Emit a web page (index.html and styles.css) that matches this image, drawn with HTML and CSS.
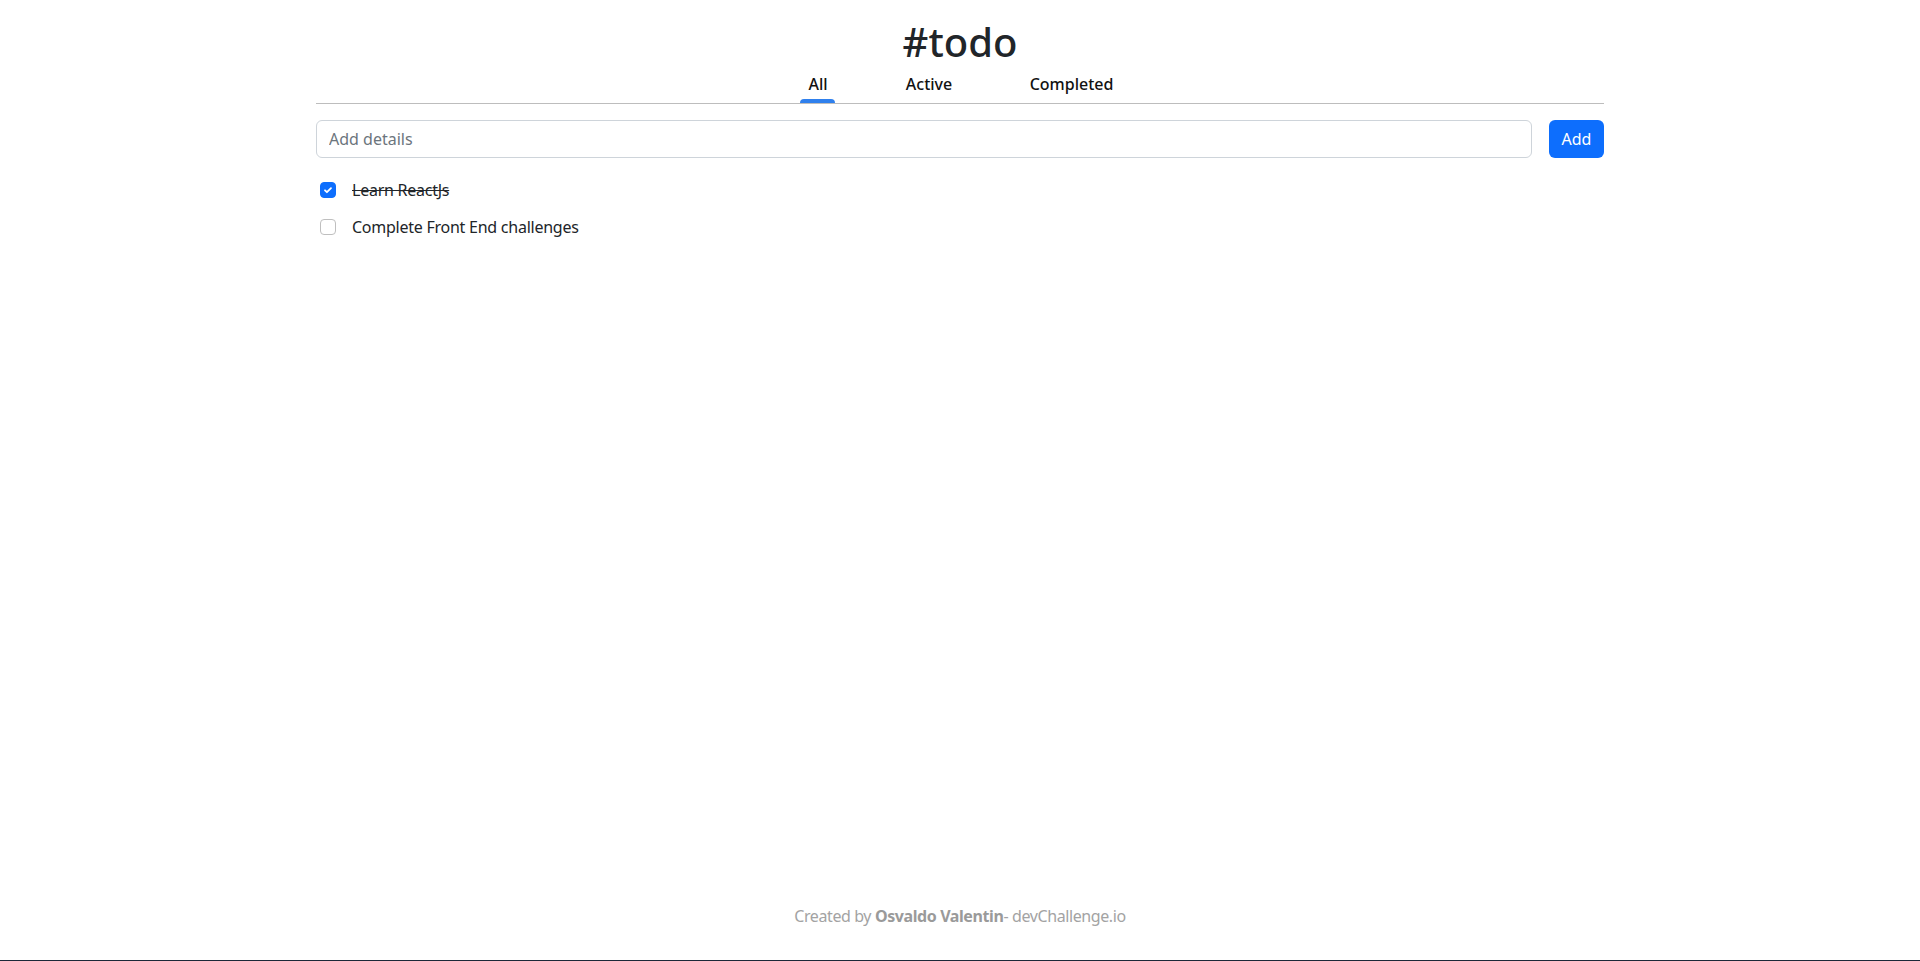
FILE: index.html
```html
<!DOCTYPE html>
<html lang="en">
  <head>
    <meta charset="UTF-8" />
    <meta name="viewport" content="width=device-width, initial-scale=1.0" />
    <title>#todo</title>

    <!-- CSS -->
    <link rel="stylesheet" href="styles.css">
  </head>
  <body>
    <div class="page">
      <div class="container">
        <h1 class="title">#todo</h1>

        <div class="tabs">
          <div class="tab tab-all active">All</div>
          <div class="tab tab-active">Active</div>
          <div class="tab tab-completed">Completed</div>
        </div>

        <form class="add-form">
          <input class="add-input" type="text" placeholder="Add details" />
          <button class="add-btn" type="button">Add</button>
        </form>

        <ul class="todo-list">
          <li class="todo">
            <span class="check checked">
              <svg width="12" height="12" viewBox="0 0 20 20">
                <path d="M5 10.5l3.2 3.2L15 7" fill="none" stroke="#fff" stroke-width="3" stroke-linecap="round" stroke-linejoin="round" />
              </svg>
            </span>
            <span class="todo-text done">Learn ReactJs</span>
          </li>
          <li class="todo">
            <span class="check"></span>
            <span class="todo-text">Complete Front End challenges</span>
          </li>
        </ul>
      </div>

      <footer class="footer">
        Created by <b>Osvaldo Valentin</b>- devChallenge.io
      </footer>
    </div>
  </body>
</html>
```

FILE: styles.css
```css
* {
  box-sizing: border-box;
}

body {
  margin: 0;
  font-family: "Noto Sans", "Open Sans", sans-serif;
  font-size: 16px;
  line-height: 24px;
  color: #212529;
  background: #fff;
}

.page {
  min-height: 100vh;
  display: flex;
  flex-direction: column;
  border-bottom: 1px solid #1b2838;
}

.container {
  width: 1288px;
  margin: 0 auto;
}

.title {
  margin: 18px 0 6px;
  font-size: 40px;
  line-height: 48px;
  font-weight: 500;
  text-align: center;
}

.tabs {
  display: flex;
  justify-content: center;
  padding-left: 10px;
  border-bottom: 1px solid #bdbdbd;
}

.tab {
  position: relative;
  padding-bottom: 7px;
  text-align: center;
  font-weight: 500;
  color: #111;
}

.tab-all {
  width: 80px;
  padding-right: 9px;
}

.tab-active {
  width: 133px;
}

.tab-completed {
  width: 152px;
}

.tab.active::after {
  content: "";
  position: absolute;
  left: 17px;
  bottom: 0;
  width: 35px;
  height: 4px;
  background-color: #2f80ed;
  border-radius: 4px 4px 0 0;
}

.add-form {
  display: flex;
  gap: 17px;
  margin: 16px 0 20px;
}

.add-input {
  flex: 1;
  height: 38px;
  padding: 6px 12px;
  border: 1px solid #ced4da;
  border-radius: 6px;
  font: inherit;
  color: #212529;
}

.add-input::placeholder {
  color: #6c757d;
}

.add-btn {
  width: 55px;
  height: 38px;
  padding: 0;
  border: none;
  border-radius: 6px;
  background-color: #0d6efd;
  color: #fff;
  font: inherit;
}

.todo-list {
  list-style: none;
  margin: 0;
  padding: 0;
  display: flex;
  flex-direction: column;
  gap: 13px;
}

.todo {
  display: flex;
  align-items: flex-start;
  padding-left: 4px;
  letter-spacing: -0.25px;
}

.check {
  width: 16px;
  height: 16px;
  margin: 4px 16px 0 0;
  border: 1px solid #bfbfbf;
  border-radius: 4px;
  background: #fff;
  display: flex;
  align-items: center;
  justify-content: center;
}

.check.checked {
  background-color: #0d6efd;
  border-color: #0d6efd;
}

.todo-text.done {
  text-decoration: line-through;
}

.footer {
  margin-top: auto;
  padding-bottom: 32px;
  text-align: center;
  letter-spacing: -0.4px;
  color: #a3a3a3;
}

.footer b {
  color: #9a9a9a;
  font-weight: 700;
}
```
